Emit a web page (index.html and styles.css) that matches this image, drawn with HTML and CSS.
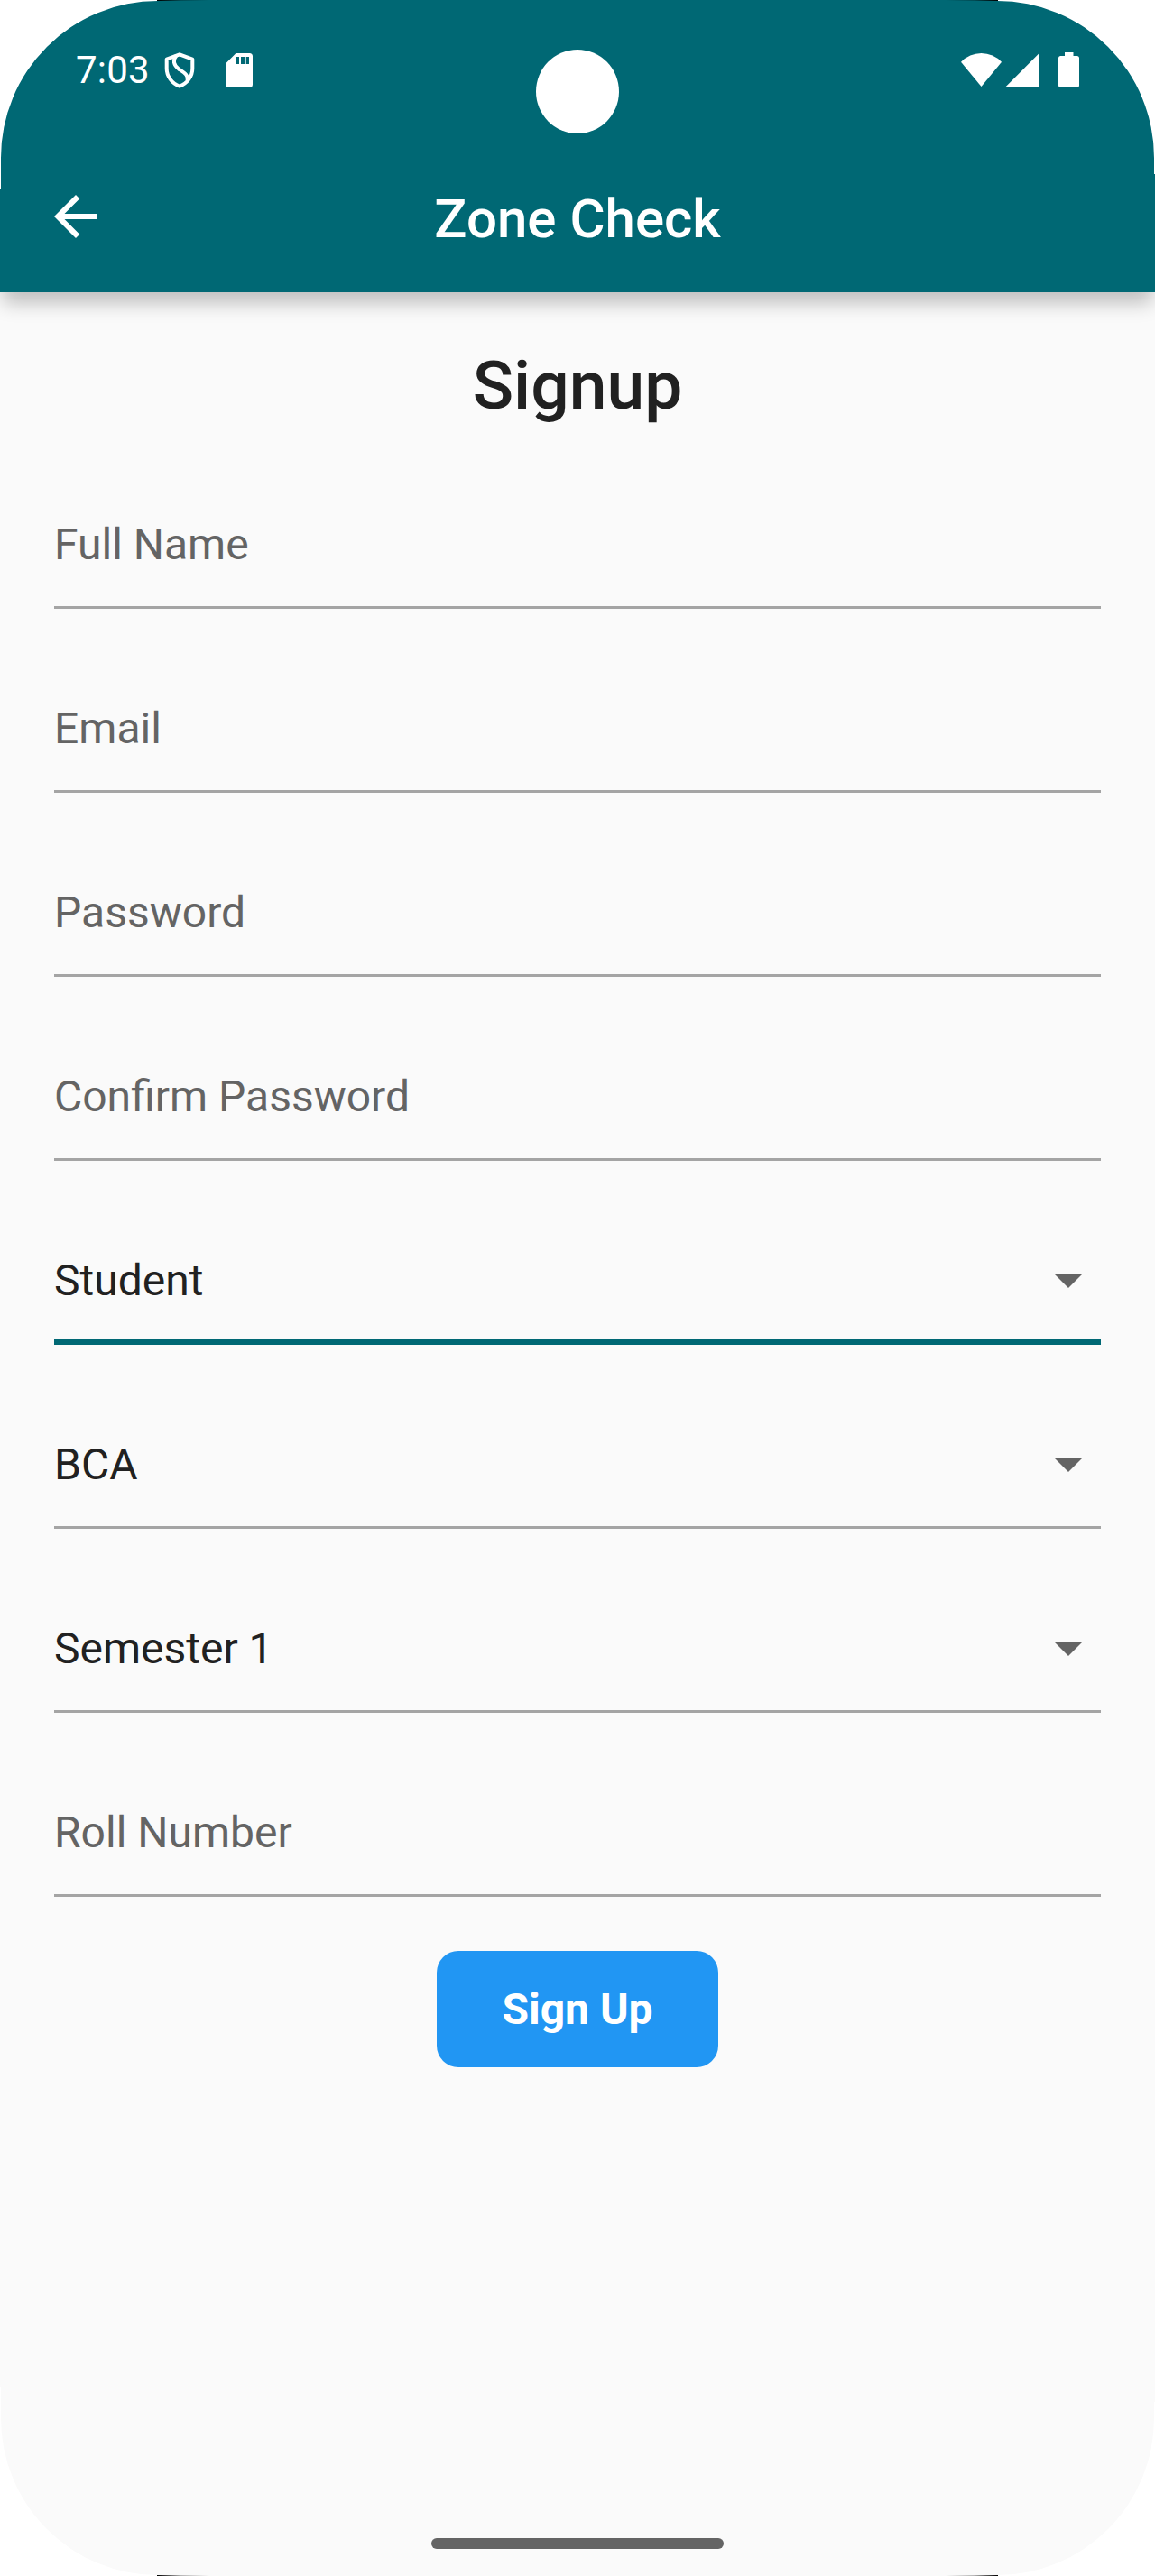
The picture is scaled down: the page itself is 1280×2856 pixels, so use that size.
FILE: index.html
```html
<!DOCTYPE html>
<html lang="en">
<head>
<meta charset="utf-8">
<title>Zone Check</title>
<link rel="stylesheet" href="styles.css">
</head>
<body>
<div class="device">
  <div class="screen">
    <header class="header">
      <div class="status">
        <span class="time">7:03</span>
        <svg class="shield" width="38" height="44" viewBox="0 0 38 44"><g fill="none" stroke="#fff" stroke-width="4" stroke-linejoin="round"><path d="M19 4.300L33.300 9.600V20C33.300 28.500 27.500 36.500 19 39.600C10.500 36.500 4.700 28.500 4.700 20V9.600Z"/><path d="M15.500 5.500C11 11 12.500 16 18 20.500C24 24.500 29.500 27.500 27.500 33.500"/></g></svg>
        <svg class="sd" width="30" height="38" viewBox="0 0 30 38"><path fill="#fff" fill-rule="evenodd" d="M11.500 0H26.500A3.500 3.500 0 0 1 30 3.500V34.500A3.500 3.500 0 0 1 26.500 38H3.500A3.500 3.500 0 0 1 0 34.500V11.500ZM11 4V12H15V4ZM17 4V12H21V4ZM22.700 4V12H26V4Z"/></svg>
        <span class="spacer"></span>
        <svg class="wifi" width="45" height="38" viewBox="0 0 45 38"><path fill="#fff" d="M0 10.700A31 31 0 0 1 45 10.700L22.500 38Z"/></svg>
        <svg class="signal" width="38" height="38" viewBox="0 0 38 38"><path fill="#fff" d="M37.700 0V37.700H0Z"/></svg>
        <svg class="battery" width="23" height="39" viewBox="0 0 23 39"><path fill="#fff" d="M7 0H16.500V4H20.500Q23 4 23 6.500V36.500Q23 39 20.500 39H2.500Q0 39 0 36.500V6.500Q0 4 2.500 4H7Z"/></svg>
      </div>
      <div class="appbar">
        <svg class="back" width="72" height="72" viewBox="0 0 24 24"><path fill="#fff" d="M20 11H7.830l5.590-5.590L12 4l-8 8 8 8 1.410-1.410L7.830 13H20z"/></svg>
        <div class="title">Zone Check</div>
      </div>
    </header>
    <main class="form">
      <h1 class="heading">Signup</h1>
      <div class="field"><span class="label">Full Name</span></div>
      <div class="field"><span class="label">Email</span></div>
      <div class="field"><span class="label">Password</span></div>
      <div class="field"><span class="label">Confirm Password</span></div>
      <div class="field select focused"><span class="label">Student</span><svg width="72" height="72" viewBox="0 0 24 24"><path d="M7 10l5 5 5-5z"/></svg></div>
      <div class="field select"><span class="label">BCA</span><svg width="72" height="72" viewBox="0 0 24 24"><path d="M7 10l5 5 5-5z"/></svg></div>
      <div class="field select"><span class="label">Semester 1</span><svg width="72" height="72" viewBox="0 0 24 24"><path d="M7 10l5 5 5-5z"/></svg></div>
      <div class="field"><span class="label">Roll Number</span></div>
      <button class="submit" type="button">Sign Up</button>
    </main>
    <div class="homebar"></div>
  </div>
  <div class="camera"></div>
  <i class="edge top left"></i><i class="edge top right"></i>
  <i class="edge bottom left"></i><i class="edge bottom right"></i>
</div>
</body>
</html>
```

FILE: styles.css
```css
* { box-sizing: border-box; }
body { margin: 0; background: #fff; font-family: Roboto, sans-serif; }
.device { position: relative; width: 1280px; height: 2856px; overflow: hidden; }
.screen {
  display: flex;
  flex-direction: column;
  height: 2856px;
  background: #fafafa;
  clip-path: path("M0 210H1V175A174 174 0 0 1 175 1V0H1105V1A174 174 0 0 1 1279 175V193H1280V2663H1279V2681A174 174 0 0 1 1105 2855V2856H175V2855A174 174 0 0 1 1 2681V2647H0Z");
}
.header {
  height: 324px;
  background: #006874;
  color: #fff;
  box-shadow: 0 15px 20px -3px rgba(0, 0, 0, .24);
}
.status { display: flex; align-items: flex-start; height: 156px; padding: 0 84px 0 84px; }
.time { width: 96px; padding-top: 53px; font-size: 42px; line-height: 50px; letter-spacing: .2px; }
.shield { margin-top: 56px; }
.sd { margin: 59px 0 0 32px; }
.spacer { flex: 1; }
.wifi { margin-top: 58px; }
.signal { margin: 59px 0 0 4px; }
.battery { margin: 58px 0 0 21px; }
.appbar { display: grid; grid-template-columns: 72px 1fr 72px; align-items: center; height: 168px; padding: 0 48px; }
.title { padding-top: 6px; text-align: center; font-size: 60px; font-weight: 500; line-height: 72px; }
.form { flex: 1; display: flex; flex-direction: column; align-items: center; padding: 0 60px; }
.heading { height: 147px; margin: 0; padding-top: 61px; color: #212121; font-size: 75px; font-weight: 500; line-height: 84px; }
.field { display: flex; justify-content: space-between; width: 100%; height: 204px; padding-top: 96px; border-bottom: 3px solid #a4a4a4; color: #646464; }
.label { padding-top: 1px; font-size: 48px; line-height: 72px; }
.select { color: #212121; }
.select svg { fill: #646464; }
.focused { border-bottom: 6px solid #006874; }
.submit { width: 312px; height: 129px; margin-top: 60px; padding: 0; border: 0; border-radius: 24px; background: #2196f3; color: #fff; font-family: inherit; font-size: 48px; font-weight: 700; }
.homebar { width: 324px; height: 12px; margin: 0 auto 30px; border-radius: 6px; background: #646464; }
.camera { position: absolute; left: 594px; top: 55px; width: 92px; height: 93px; border-radius: 50%; background: #fff; }
.edge { position: absolute; width: 58px; height: 1px; }
.top { top: 0; }
.bottom { bottom: 0; }
.left { left: 174px; background: linear-gradient(90deg, #000, rgba(0, 0, 0, .28) 45%, rgba(0, 0, 0, 0)); }
.right { right: 174px; background: linear-gradient(270deg, #000, rgba(0, 0, 0, .28) 45%, rgba(0, 0, 0, 0)); }
```
